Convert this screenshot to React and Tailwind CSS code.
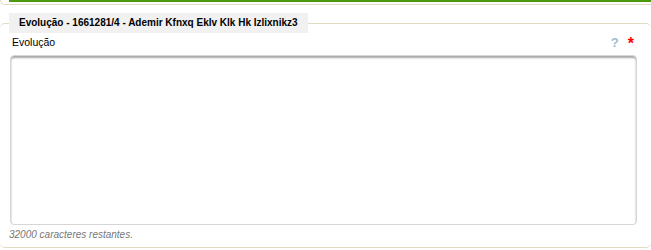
export default function App() {
  return (
    <div className="w-[651px] h-[250px] bg-white font-['Liberation_Sans',Arial,sans-serif] text-[10px] text-black overflow-hidden">
      {/* previous panel bottom */}
      <div className="h-[5px] border-b border-l border-[#e0dbc1] rounded-bl-[5px] pl-[8px]">
        <div className="h-[2px] bg-[#4c9a0c]" />
      </div>

      <fieldset className="mt-[8px] border-t border-b border-[#e0dbc1] rounded-[5px] pb-[6px]">
        <legend className="ml-[9px] px-[10px] h-[20px] leading-[20px] bg-[#f1f1f1] font-bold text-[10px]">
          Evolução - 1661281/4 - Ademir Kfnxq Eklv Klk Hk Izlixnikz3
        </legend>

        <div className="mt-[3px] pl-[12px] pr-[17px] flex items-center justify-between h-[13px] leading-[13px] text-[10.5px]">
          <span>Evolução</span>
          <span className="flex items-center gap-[9px]">
            <span className="text-[#9dbbd0] text-[13px] font-bold">?</span>
            <span className="text-[#ff0000] text-[16px] font-bold leading-none mt-[3px]">*</span>
          </span>
        </div>

        <textarea className="block mt-[6px] ml-[10px] w-[627px] h-[170px] resize-none border border-[#d6d6d6] rounded-[4px] shadow-[inset_0_2px_2px_rgba(0,0,0,0.35)] outline-none" />

        <div className="mt-[3px] ml-[9px] italic text-[#777777] leading-[13px] text-[10px]">
          32000 caracteres restantes.
        </div>
      </fieldset>
    </div>
  );
}
